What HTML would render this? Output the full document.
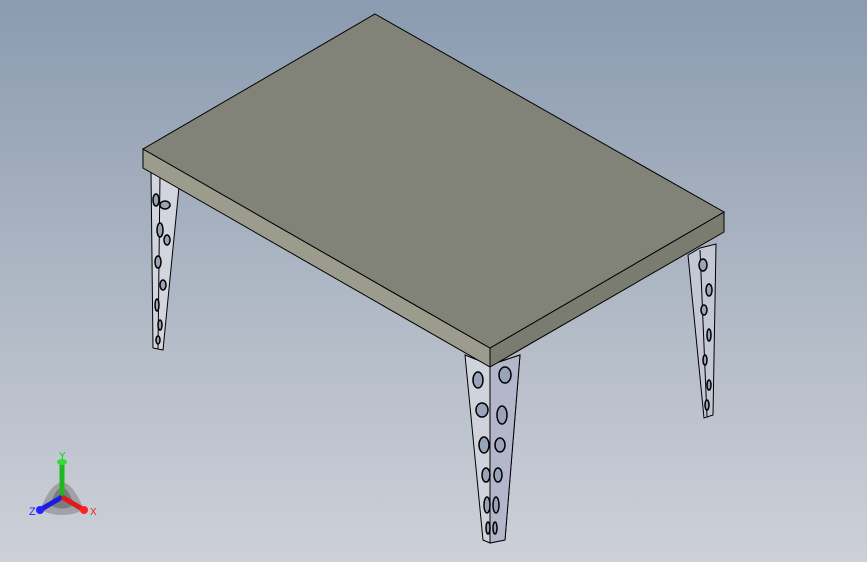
<!DOCTYPE html>
<html><head><style>
html,body{margin:0;padding:0;width:867px;height:562px;overflow:hidden}
body{background:linear-gradient(#8b9bb0,#b4bcc8 60%,#cdd0d8)}
</style></head><body>
<svg width="867" height="562" viewBox="0 0 867 562" xmlns="http://www.w3.org/2000/svg" style="position:absolute;left:0;top:0">
<g stroke="#000" stroke-width="1">
<polygon points="151,170 179,187 163,350 153,348" fill="#d2d5dd"/>
<line x1="160" y1="175" x2="158" y2="349"/>
<polygon points="688,255 700,248 716,244 713,415 704,418" fill="#c4c7d4"/>
<line x1="700" y1="250" x2="707" y2="417"/>
<polygon points="465,355 490,365 520,355 505,540 490,543 483,540" fill="#d0d3dc"/>
<polygon points="490,365 520,355 505,540 490,543" fill="#b4b7cb"/>
<line x1="490" y1="365" x2="490" y2="543"/>
</g>
<g fill="#9aa4b8" stroke="#000" stroke-width="1.5">
<ellipse cx="156" cy="200" rx="3" ry="6"/><ellipse cx="165" cy="205" rx="5" ry="4"/><ellipse cx="160" cy="230" rx="3" ry="7"/><ellipse cx="167" cy="240" rx="3" ry="5"/><ellipse cx="158" cy="262" rx="3" ry="6"/><ellipse cx="163" cy="285" rx="3" ry="5"/><ellipse cx="157" cy="305" rx="2" ry="6"/><ellipse cx="160" cy="325" rx="2" ry="5"/><ellipse cx="158" cy="340" rx="2" ry="4"/>
<ellipse cx="703" cy="265" rx="4" ry="6"/><ellipse cx="709" cy="290" rx="3" ry="6"/><ellipse cx="704" cy="310" rx="3" ry="5"/><ellipse cx="709" cy="335" rx="2" ry="6"/><ellipse cx="705" cy="360" rx="2" ry="5"/><ellipse cx="709" cy="385" rx="2" ry="5"/><ellipse cx="707" cy="405" rx="2" ry="5"/>
<ellipse cx="478" cy="380" rx="5" ry="8"/><ellipse cx="505" cy="375" rx="6" ry="8"/><ellipse cx="482" cy="410" rx="6" ry="7"/><ellipse cx="502" cy="415" rx="5" ry="9"/><ellipse cx="484" cy="445" rx="5" ry="8"/><ellipse cx="500" cy="445" rx="5" ry="7"/><ellipse cx="486" cy="475" rx="4" ry="7"/><ellipse cx="498" cy="475" rx="4" ry="7"/><ellipse cx="487" cy="505" rx="3" ry="8"/><ellipse cx="496" cy="505" rx="3" ry="8"/><ellipse cx="488" cy="528" rx="2" ry="6"/><ellipse cx="495" cy="528" rx="2" ry="6"/>
</g>
<g stroke="#000" stroke-width="1">
<polygon points="143,149 490,348 490,367 143,168" fill="#9c9c8e"/>
<polygon points="490,348 724,212 724,232 490,367" fill="#7b7c70"/>
<polygon points="375,14 724,212 490,348 143,149" fill="#828378"/>
</g>
<path d="M40 510 Q62 455 84 510 Q62 520 40 510Z" fill="#777" opacity="0.5"/>
<path d="M50 505 Q62 470 74 505 Q62 512 50 505Z" fill="#555" opacity="0.5"/>
<line x1="62" y1="497" x2="62" y2="462" stroke="#1fb81f" stroke-width="5"/>
<ellipse cx="62" cy="462" rx="5" ry="3" fill="#3d3"/>
<line x1="62" y1="497" x2="40" y2="510" stroke="#1a1ae0" stroke-width="5"/>
<circle cx="40" cy="510" r="4" fill="#22f"/>
<line x1="62" y1="497" x2="84" y2="510" stroke="#e01a1a" stroke-width="5"/>
<circle cx="84" cy="510" r="4" fill="#f22"/>
<text x="59" y="459" font-family="Liberation Sans,sans-serif" font-size="10" fill="#1c1">Y</text>
<text x="29" y="515" font-family="Liberation Sans,sans-serif" font-size="11" fill="#22f">Z</text>
<text x="90" y="515" font-family="Liberation Sans,sans-serif" font-size="10" fill="#e22">X</text>
</svg>
</body></html>
